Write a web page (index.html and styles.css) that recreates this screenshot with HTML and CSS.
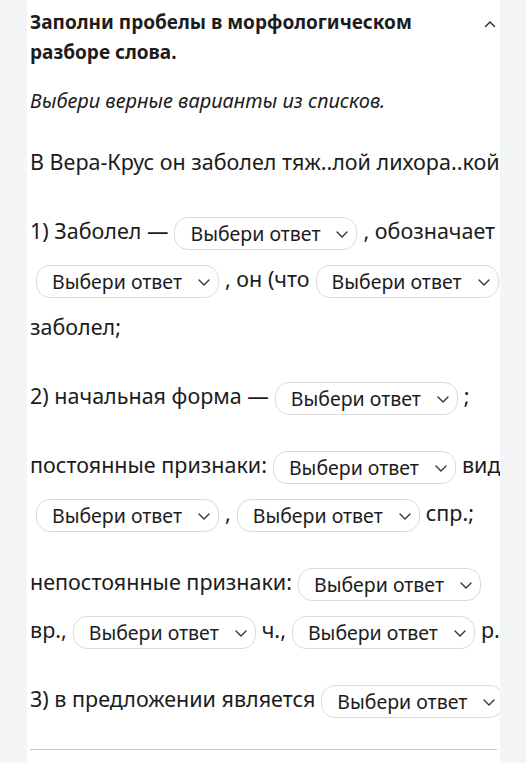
FILE: index.html
```html
<!DOCTYPE html>
<html lang="ru">
<head>
    <meta charset="UTF-8">
    <meta name="viewport" content="width=device-width, initial-scale=1.0">
    <title>Морфологический разбор</title>
    <link rel="stylesheet" href="styles.css">
</head>
<body>
    <div class="panel">
        <div class="task-head">
            <h2>Заполни пробелы в морфологическом разборе слова.</h2>
            <button class="toggle" aria-label="Свернуть">
                <svg width="12" height="8" viewBox="0 0 12 8"><path d="M1.5 6.5 L6 2 L10.5 6.5" fill="none" stroke="#222" stroke-width="1.4" stroke-linecap="round" stroke-linejoin="round"/></svg>
            </button>
        </div>

        <p class="hint">Выбери верные варианты из списков.</p>

        <div class="task-text">
            <p class="sentence">В Вера-Крус он заболел тяж..лой лихора..кой.</p>

            <p>1) Заболел&nbsp;—<span class="pick">Выбери ответ<svg class="arrow" viewBox="0 0 12 7"><path d="M1 1 L6 6 L11 1"/></svg></span>, обозначает<span class="pick">Выбери ответ<svg class="arrow" viewBox="0 0 12 7"><path d="M1 1 L6 6 L11 1"/></svg></span>, он (что<span class="pick">Выбери ответ<svg class="arrow" viewBox="0 0 12 7"><path d="M1 1 L6 6 L11 1"/></svg></span>) заболел;</p>

            <p>2) начальная форма&nbsp;—<span class="pick">Выбери ответ<svg class="arrow" viewBox="0 0 12 7"><path d="M1 1 L6 6 L11 1"/></svg></span>;</p>

            <p>постоянные признаки:<span class="pick">Выбери ответ<svg class="arrow" viewBox="0 0 12 7"><path d="M1 1 L6 6 L11 1"/></svg></span>вид,<span class="pick">Выбери ответ<svg class="arrow" viewBox="0 0 12 7"><path d="M1 1 L6 6 L11 1"/></svg></span>,<span class="pick">Выбери ответ<svg class="arrow" viewBox="0 0 12 7"><path d="M1 1 L6 6 L11 1"/></svg></span>спр.;</p>

            <p>непостоянные признаки:<span class="pick">Выбери ответ<svg class="arrow" viewBox="0 0 12 7"><path d="M1 1 L6 6 L11 1"/></svg></span>вр.,<span class="pick">Выбери ответ<svg class="arrow" viewBox="0 0 12 7"><path d="M1 1 L6 6 L11 1"/></svg></span>ч.,<span class="pick">Выбери ответ<svg class="arrow" viewBox="0 0 12 7"><path d="M1 1 L6 6 L11 1"/></svg></span>р.;</p>

            <p class="sentence">3) в предложении является<span class="pick">Выбери ответ<svg class="arrow" viewBox="0 0 12 7"><path d="M1 1 L6 6 L11 1"/></svg></span>.</p>
        </div>

        <hr class="divider">
    </div>
</body>
</html>
```

FILE: styles.css
```css
body {
    margin: 0;
    background-color: #f4f5f7;
    font-family: "Noto Sans", Arial, sans-serif;
    color: #1c1c1c;
}

.panel {
    margin-left: 27px;
    width: 470px;
    min-height: 763px;
    padding: 7px 0 0 3px;
    background: #fff;
    overflow: hidden;
}

.task-head {
    display: flex;
    align-items: flex-start;
    justify-content: space-between;
}

.task-head h2 {
    margin: 0;
    width: 400px;
    font-size: 19px;
    line-height: 30px;
    font-weight: 700;
}

.toggle {
    border: 0;
    background: none;
    padding: 0;
    margin: 9px 3px 0 0;
    width: 14px;
    height: 10px;
}

.hint {
    margin: 19px 0 0;
    font-size: 20px;
    line-height: 30px;
    font-style: italic;
}

.task-text {
    width: 490px;
    margin-top: 22px;
    font-size: 21.5px;
    line-height: 48px;
}

.task-text p {
    margin: 0 0 21px;
}

.task-text .sentence {
    white-space: nowrap;
}

.pick {
    display: inline-flex;
    align-items: center;
    height: 31px;
    margin: 0 6px;
    padding: 0 8px 0 15px;
    border: 1px solid #dadada;
    border-radius: 14px;
    font-size: 19.5px;
    line-height: 31px;
    vertical-align: middle;
    white-space: nowrap;
}

.arrow {
    width: 12px;
    height: 7px;
    margin: 2px 0 0 16px;
    fill: none;
    stroke: #333;
    stroke-width: 1.4;
    stroke-linecap: round;
    stroke-linejoin: round;
}

.divider {
    width: 467px;
    margin: 26px 0 0;
    border: 0;
    border-top: 1px solid #c8c8c8;
}
```
